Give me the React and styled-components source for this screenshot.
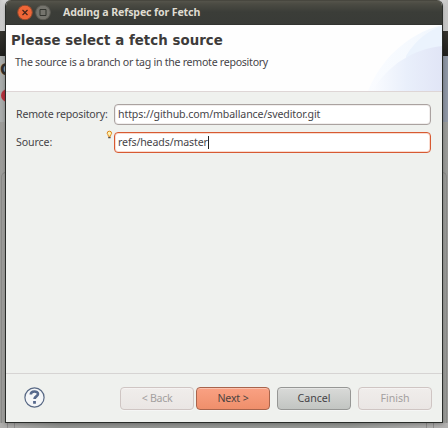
import React from "react";
import styled, { createGlobalStyle } from "styled-components";

const Global = createGlobalStyle`
  * { box-sizing: border-box; }
  body { margin: 0; overflow: hidden; font-family: "Noto Sans", "Open Sans", sans-serif; }
`;

const Desktop = styled.div`
  position: relative;
  width: 448px;
  height: 428px;
  padding: 0 5px 5px;
  overflow: hidden;
  background: #a0a19e;
`;

const Backdrop = styled.div`
  position: absolute;
  inset: 0;
  display: flex;
  flex-direction: column;
`;

const BackTop = styled.div`
  height: 31px;
  flex: none;
  background: linear-gradient(90deg, #c9c9c9 0, #dcdcdc 5px, #dcdcdc 440px, #c4c4c4 448px);
`;
const BackBar = styled.div`
  height: 25px;
  flex: none;
  background: linear-gradient(#35342f, #20201e);
`;
const BackHeader = styled.div`
  position: relative;
  height: 66px;
  flex: none;
  background: linear-gradient(90deg, #aaadac 0 50%, #8f97a5 50%);
  font: bold 15px/18px "DejaVu Sans", sans-serif;
  color: #302f2d;
`;
const BackLetter = styled.span`
  position: absolute;
  left: 0;
  top: 5px;
`;
const BackError = styled.span`
  position: absolute;
  left: 1px;
  top: 33px;
  width: 13px;
  height: 13px;
  border-radius: 50%;
  background: #b8323e;
`;
const BackBody = styled.div`
  flex: 1;
  min-height: 0;
  padding-top: 50px;
  background: linear-gradient(90deg, #9b9b98, #a6a6a3 5px, #a0a19e 440px, #999a97);
`;
const BackPanel = styled.div`
  height: 256px;
  border: 1px solid #8b8b89;
  border-bottom: 0;
  border-radius: 5px 5px 0 0;
  margin: 0 1px;
`;
const BackFloor = styled.div`
  position: absolute;
  left: 0;
  right: 0;
  bottom: 0;
  height: 5px;
  background: linear-gradient(90deg, #b0afad, #929491 60px, #979996 350px, #b2b1b0);
`;
const BackFrame = styled.div`
  height: 5px;
  margin: 0 14px 0 7px;
  border: solid #8f8d8c;
  border-width: 0 1px;
  padding: 0 6px;
`;
const BackFrameInner = styled.div`
  height: 5px;
  border: solid #8f8d8c;
  border-width: 0 1px;
`;

const Dialog = styled.div`
  position: relative;
  width: 438px;
  height: 423px;
  display: flex;
  flex-direction: column;
  border: 1px solid #292c29;
  border-top: 0;
  border-radius: 6px 6px 0 0;
  overflow: hidden;
  background: #eff1ee;
  color: #464448;
  box-shadow: 0 1px 4px rgba(0, 0, 0, 0.3);
`;

const TitleBar = styled.div`
  height: 25px;
  flex: none;
  display: flex;
  align-items: center;
  padding-left: 11px;
  background: linear-gradient(#3b3a33 0, #55544b 1px, #4b4b43 4px, #3b3d38 12px, #393b37 24px, #2c2d2a 25px);
`;
const WindowButton = styled.svg`
  width: 16px;
  height: 16px;
  margin-right: 2px;
  transform: translateY(-0.5px);
`;
const Title = styled.div`
  margin-left: 10px;
  font-size: 10.6px;
  font-weight: 700;
  line-height: 15px;
  letter-spacing: ${(p) => p.$spacing}px;
  color: #dfdbd0;
  white-space: nowrap;
  transform: translateY(-0.5px);
`;

const Header = styled.div`
  position: relative;
  height: 67px;
  flex: none;
  padding: 7px 0 0 5px;
  border-bottom: 1px solid #ded6d6;
  background: #fefefe;
`;
const Arcs = styled.svg`
  position: absolute;
  right: 0;
  top: 0;
  width: 74px;
  height: 66px;
`;
const Heading = styled.div`
  position: relative;
  font: bold 13.33px/18px "DejaVu Sans", sans-serif;
  letter-spacing: ${(p) => p.$spacing}px;
  color: #3d3b3a;
  white-space: nowrap;
`;
const Text = styled.span`
  font-size: 10.6px;
  line-height: 14px;
  letter-spacing: ${(p) => p.$spacing}px;
  white-space: pre;
`;
const Description = styled.div`
  display: flex;
  position: relative;
  margin: 5px 0 0 4px;
`;

const Form = styled.div`
  flex: 1;
  display: flex;
  flex-direction: column;
  gap: 7px;
  padding: 12px 11px 0 10px;
`;
const Field = styled.div`
  display: grid;
  grid-template-columns: 91px 7px 317px;
  height: 21px;
`;
const Label = styled.div`
  display: flex;
  align-items: center;
  padding-bottom: 1px;
`;
const Decoration = styled.svg`
  width: 7px;
  height: 10px;
  margin: -2px 0 0 -1px;
`;
const Input = styled.div`
  display: flex;
  align-items: center;
  height: 21px;
  padding: 0 0 1px 3px;
  border: 1px solid ${(p) => (p.$focused ? "#d75a32" : "#aaa2a0")};
  border-radius: 4px;
  background: #fff;
  box-shadow: inset 0 0 0 1px ${(p) => (p.$focused ? "#f9dbcf" : "#f1eeed")};
`;
const Caret = styled.span`
  width: 1px;
  height: 13px;
  background: #222;
`;

const Footer = styled.div`
  height: 49px;
  flex: none;
  display: flex;
  align-items: flex-start;
  padding: 13px 9px 0 18px;
  border-top: 1px solid #d6d4d3;
`;
const Help = styled.svg`
  width: 21px;
  height: 21px;
  flex: none;
  margin-right: 75px;
`;
const tones = {
  disabled: ["#cfc5c3", "#f0edeb", "#eae6e4", "#a3a09f"],
  primary: ["#a8644c", "#faa183", "#ef8f6b", "#4c4341"],
  normal: ["#969795", "#d9dad8", "#c2c5c2", "#464448"],
};
const Button = styled.div`
  width: 74px;
  height: 23px;
  flex: none;
  display: flex;
  align-items: center;
  justify-content: center;
  margin-left: ${(p) => p.$gap}px;
  padding-bottom: 2px;
  border: 1px solid ${(p) => tones[p.$tone][0]};
  border-radius: 4px;
  background: linear-gradient(${(p) => tones[p.$tone][1]}, ${(p) => tones[p.$tone][2]});
  color: ${(p) => tones[p.$tone][3]};
  box-shadow: inset 0 1px rgba(255, 255, 255, 0.35), 0 1px rgba(255, 255, 255, 0.4);
`;

export default function App() {
  return (
    <Desktop>
      <Global />
      <Backdrop>
        <BackTop />
        <BackBar />
        <BackHeader>
          <BackLetter>C</BackLetter>
          <BackError />
        </BackHeader>
        <BackBody>
          <BackPanel />
        </BackBody>
        <BackFloor>
          <BackFrame>
            <BackFrameInner />
          </BackFrame>
        </BackFloor>
      </Backdrop>
      <Dialog>
        <TitleBar>
          <WindowButton viewBox="0 0 16 16">
            <circle cx="8" cy="8" r="7.3" fill="#ef6637" stroke="#8f4a2e" />
            <path d="M5.5 5.5l5 5M10.5 5.5l-5 5" stroke="#45261b" strokeWidth="1.2" />
          </WindowButton>
          <WindowButton viewBox="0 0 16 16">
            <circle cx="8" cy="8" r="7.3" fill="#75746d" stroke="#5b5a53" />
            <path d="M5 5h6v6h-6z" fill="none" stroke="#33342f" />
          </WindowButton>
          <Title $spacing={-0.13}>Adding a Refspec for Fetch</Title>
        </TitleBar>
        <Header>
          <Arcs viewBox="0 0 74 66">
            <defs>
              <linearGradient id="outer" x1="0" x2="1">
                <stop offset="0" stopColor="#fafcff" />
                <stop offset="0.6" stopColor="#f5f9fe" />
                <stop offset="1" stopColor="#f0f6fd" />
              </linearGradient>
              <linearGradient id="inner" x1="0" x2="1">
                <stop offset="0" stopColor="#fafcff" />
                <stop offset="0.5" stopColor="#e9effb" />
                <stop offset="1" stopColor="#e1e5f6" />
              </linearGradient>
            </defs>
            <path d="M0 66C12 36 38 9 74 0V66Z" fill="url(#outer)" />
            <path d="M38 31C47 16 59 6 74 1V22C61 24 50 29 38 38Z" fill="#ebf3fd" />
            <path d="M4 66C20 40 45 24 74 21V66Z" fill="url(#inner)" />
          </Arcs>
          <Heading $spacing={0.05}>Please select a fetch source</Heading>
          <Description>
            <Text $spacing={-0.27}>The source is a branch or tag in the remote repository</Text>
          </Description>
        </Header>
        <Form>
          <Field>
            <Label><Text $spacing={-0.2}>Remote repository:</Text></Label>
            <span />
            <Input><Text $spacing={-0.12}>https://github.com/mballance/sveditor.git</Text></Input>
          </Field>
          <Field>
            <Label><Text $spacing={-0.1}>Source:</Text></Label>
            <Decoration viewBox="0 0 7 10">
              <path d="M1.2 3.2a2.2 2 0 0 1 4.4 0c0 1-1.100 1.300-1.100 3.100h-2.200c0-1.800-1.100-2.100-1.100-3.100z" fill="#fff3b0" stroke="#dd8418" />
              <path d="M2.2 7.6h2.4" stroke="#514b45" strokeWidth="1.2" />
            </Decoration>
            <Input $focused><Text $spacing={-0.12}>refs/heads/master</Text><Caret /></Input>
          </Field>
        </Form>
        <Footer>
          <Help viewBox="0 0 21 21">
            <circle cx="10.5" cy="10.5" r="9.6" fill="#f4f6f8" stroke="#586985" strokeWidth="1.2" />
            <path d="M6.8 7.6c0-4 7.2-4 7.2-.7 0 2.500-3.500 2.400-3.500 5.200" fill="none" stroke="#56698c" strokeWidth="2.6" />
            <path d="M9.1 14h2.800v2.800h-2.800z" fill="#56698c" />
          </Help>
          <Button $tone="disabled" $gap={0}><Text $spacing={-0.3}>&lt; Back</Text></Button>
          <Button $tone="primary" $gap={2}><Text $spacing={-0.15}>Next &gt;</Text></Button>
          <Button $tone="normal" $gap={7}><Text $spacing={0}>Cancel</Text></Button>
          <Button $tone="disabled" $gap={7}><Text $spacing={0}>Finish</Text></Button>
        </Footer>
      </Dialog>
    </Desktop>
  );
}
